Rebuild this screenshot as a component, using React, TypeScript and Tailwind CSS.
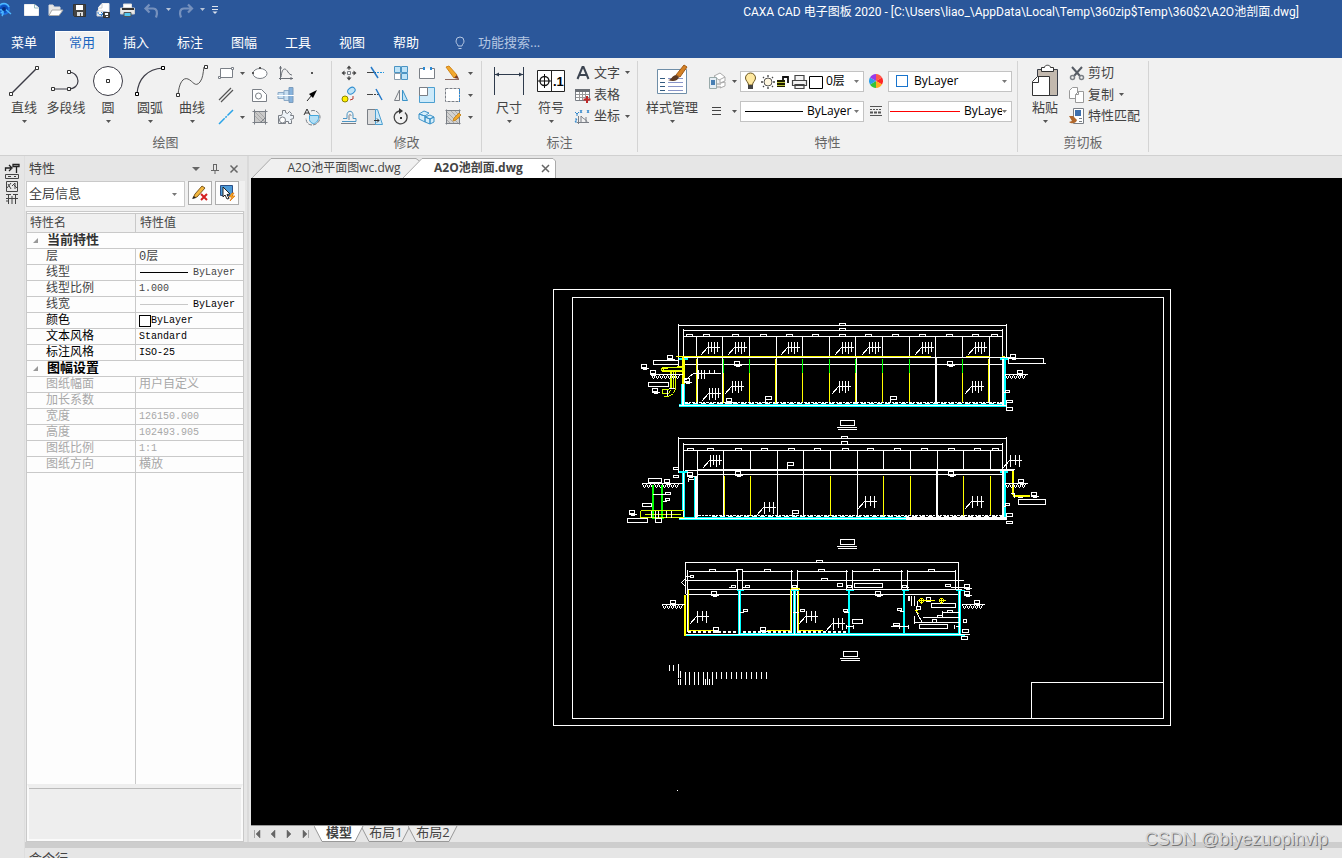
import { useState } from "react";
import type { ReactNode } from "react";
import clsx from "clsx";

interface IconProps {
    w?: number;
    h?: number;
    children: ReactNode;
}

function Icon({ w = 18, h = 18, children }: IconProps) {
    return (
        <svg width={w} height={h} viewBox={`0 0 ${w} ${h}`} fill="none" stroke="#7a7f86" className="shrink-0" aria-hidden="true">
            {children}
        </svg>
    );
}

function Caret({ color = "#555" }: { color?: string }) {
    return (
        <svg width="5" height="3" viewBox="0 0 5 3" fill={color} className="shrink-0" aria-hidden="true">
            <path d="M0 0h5L2.5 3z" />
        </svg>
    );
}

/* ---------- title bar ---------- */

const quickIcons = [
    {
        name: "新建",
        icon: (
            <Icon>
                <path d="M1.500 1.500h10l4 3v8h-14z" fill="#fff" stroke="#eee" />
                <path d="M11.500 1v4h4" stroke="#9bb" />
            </Icon>
        ),
    },
    {
        name: "打开",
        icon: (
            <Icon>
                <path d="M2 12V2h4l1 2h6v3" fill="#e6e6e6" stroke="#ddd" />
                <path d="M2 12.500 5 7h11l-4 5.500z" fill="#fff" stroke="#aaa" />
            </Icon>
        ),
    },
    {
        name: "保存",
        icon: (
            <Icon>
                <path d="M2.500 1.500h12v12h-11l-1-1z" fill="#444" stroke="#333" />
                <path d="M5 2h7v5H5z" fill="#fff" stroke="none" />
                <path d="M6 9h6v4H6z" fill="#ddd" stroke="none" />
                <path d="M9.500 10v3" stroke="#444" />
            </Icon>
        ),
    },
    {
        name: "另存为",
        icon: (
            <Icon>
                <path d="M3.500 8V4.500L7 .5h7V9" fill="#fff" stroke="#eee" />
                <path d="M3 5h4V1M2 8v5h6V8z" fill="#fff" stroke="#ccc" />
                <path d="M3 9c0 3 2 3 5 2M6 9l2 2-2 2" stroke="#2b7cd0" />
                <path d="M8.500 9.500h6v5h-6z" fill="#444" stroke="#333" />
                <path d="M10 10h3v2h-3zM11 13h2v1h-2z" fill="#fff" stroke="none" />
            </Icon>
        ),
    },
    {
        name: "打印",
        icon: (
            <Icon>
                <path d="M4.500 1h8v4h-8z" fill="#fff" stroke="#ddd" />
                <path d="M1.500 5h14v6h-14z" fill="#e8e8e8" stroke="#ccc" />
                <path d="M3 6h12" stroke="#333" strokeWidth="2" />
                <path d="M5 9.500h7v4H5z" fill="#55c8f0" stroke="#555" />
            </Icon>
        ),
    },
];

function TitleBar() {
    return (
        <div className="flex h-6 items-center">
            <div className="flex flex-1 items-center">
                <Icon w={20} h={20}>
                    <circle cx="4" cy="7" r="5" fill="#0b4fc0" stroke="#1f6fe0" strokeWidth="2" />
                    <path d="M0 3c4-3 8-1 9 2M1 11l4-4 6 5M0 8c3-1 4 3 2 6" stroke="#4db8ff" strokeWidth="1.500" />
                    <circle cx="4" cy="7" r="2" fill="#082f80" stroke="none" />
                </Icon>
                <div className="ml-[3px] flex gap-[6px]">
                    {quickIcons.map((q) => (
                        <button key={q.name} type="button" aria-label={q.name}>
                            {q.icon}
                        </button>
                    ))}
                    <button type="button" aria-label="撤销" className="flex items-center gap-[5px]">
                        <Icon>
                            <path d="M6.500 1.500 2.500 5.500l4 4M3 5.500h7c4 0 5 4 3 9" stroke="#7691bd" strokeWidth="2.200" />
                        </Icon>
                        <span className="pb-[6px]"><Caret color="#b8c4d8" /></span>
                    </button>
                    <button type="button" aria-label="重做" className="flex items-center gap-[5px]">
                        <Icon>
                            <path d="M11 1.500l4 4-4 4M14 5.500H7C3 5.500 2 9.500 4 14.500" stroke="#7691bd" strokeWidth="2.200" />
                        </Icon>
                        <span className="pb-[6px]"><Caret color="#b8c4d8" /></span>
                    </button>
                    <button type="button" aria-label="自定义快速访问工具栏">
                        <Icon w={8} h={14}>
                            <path d="M1 1.500h6M1 4.500h6" stroke="#dde4ee" />
                            <path d="M1.500 6.500h5L4 9z" fill="#dde4ee" stroke="none" />
                        </Icon>
                    </button>
                </div>
            </div>
            <h1 className="truncate pr-[43px] font-['Roboto','Noto_Sans_CJK_SC',sans-serif] text-[12px] font-normal text-white">
                CAXA CAD 电子图板 2020 - [C:\Users\liao_\AppData\Local\Temp\360zip$Temp\360$2\A2O池剖面.dwg]
            </h1>
        </div>
    );
}

const menuTabs = ["常用", "插入", "标注", "图幅", "工具", "视图", "帮助"];

function MenuTabs() {
    const [active, setActive] = useState("常用");
    return (
        <nav className="flex h-[27px] items-stretch text-[13px] text-white">
            <button type="button" className="w-[55px] pb-1 pl-[11px] text-left">
                菜单
            </button>
            {menuTabs.map((t) => (
                <button
                    key={t}
                    type="button"
                    onClick={() => setActive(t)}
                    className={clsx("w-[54px] pb-1", active === t && "border-x border-t border-white bg-[#f1f1f1] text-[#1a66c0]")}
                >
                    {t}
                </button>
            ))}
            <label className="ml-[21px] flex items-center gap-3 pb-1">
                <Icon w={12} h={14}>
                    <path d="M4 10c0-2-2-2-2-5a4 4 0 0 1 8 0c0 3-2 3-2 5zM4.500 12.500h3" stroke="#b4c6e2" />
                </Icon>
                <input type="text" aria-label="功能搜索" placeholder="功能搜索..." className="w-28 bg-transparent outline-none placeholder:text-[#b4c6e2]" />
            </label>
        </nav>
    );
}

/* ---------- ribbon ---------- */

function Group({ title, className, inset, children }: { title: string; className: string; inset: string; children: ReactNode }) {
    return (
        <section className={clsx("my-[3px] flex shrink-0 flex-col border-r border-[#d4d4d4]", className)}>
            <div className={clsx("flex h-[66px] pt-px", inset)}>{children}</div>
            <h2 className="mt-[6px] text-center text-[13px] leading-[18px] font-normal text-[#666]">{title}</h2>
        </section>
    );
}

function BigButton({ label, className = "w-[42px]", caret = true, children }: { label: string; className?: string; caret?: boolean; children: ReactNode }) {
    return (
        <button type="button" className={clsx("flex h-16 shrink-0 flex-col items-center pt-[2px] whitespace-nowrap", className)}>
            <Icon w={34} h={34}>
                {children}
            </Icon>
            <span className="leading-[18px]">{label}</span>
            <span className="flex h-[10px] items-center">{caret && <Caret />}</span>
        </button>
    );
}

function Tool({ name, children }: { name: string; children: ReactNode }) {
    return (
        <button type="button" aria-label={name} className="flex h-[22px] items-center justify-center">
            {children}
        </button>
    );
}

function DrawGroup() {
    return (
        <Group title="绘图" className="w-[332px]" inset="pl-[3px]">
            <BigButton label="直线">
                <path d="M4 30 30 4" stroke="#3c3c46" strokeWidth="1.500" />
                <path d="M2.500 28.500h3v3h-3zM28.500 2.500h3v3h-3z" fill="#fff" stroke="#333" />
            </BigButton>
            <BigButton label="多段线" caret={false}>
                <path d="M4 25h15c7 0 10-4 10-8s-3-9-10-9" stroke="#3c3c46" strokeWidth="1.200" />
                <path d="M2.500 23.500h3v3h-3zM18.500 23.500h3v3h-3zM18.500 6.500h3v3h-3z" fill="#fff" stroke="#333" />
            </BigButton>
            <BigButton label="圆">
                <circle cx="17" cy="17" r="14.500" fill="#fff" stroke="#3c3c46" />
                <path d="M15.500 15.500h3v3h-3z" fill="#fff" stroke="#333" />
            </BigButton>
            <BigButton label="圆弧">
                <path d="M4 30C5 15 14 5 30 4" stroke="#3c3c46" strokeWidth="1.200" />
                <path d="M2.500 28.500h3v3h-3zM28.500 2.500h3v3h-3z" fill="#fff" stroke="#000" />
            </BigButton>
            <BigButton label="曲线">
                <path d="M3 31C4 19 8 13 13 15s7 9 12 3c3-4 3-9 4-15" stroke="#555" />
                <path d="M1.500 29.500h3v3h-3zM29.500 1.500h3v3h-3z" fill="#fff" stroke="#333" />
            </BigButton>
            <div className="grid grid-cols-[25px_9px_26px_26px_26px]">
                <Tool name="矩形">
                    <Icon>
                        <path d="M3.500 4.500h12v9h-12z" fill="#fff" />
                        <path d="M1.500 12.500h2v2h-2zM14.500 3.500h2v2h-2z" fill="#fff" />
                    </Icon>
                </Tool>
                <Tool name="矩形选项"><Caret /></Tool>
                <Tool name="椭圆">
                    <Icon>
                        <ellipse cx="9" cy="9.500" rx="7" ry="5" fill="#fff" />
                        <path d="M1 8h2v2H1zM8 3h2v2H8z" fill="#555" stroke="none" />
                    </Icon>
                </Tool>
                <Tool name="公式曲线">
                    <Icon>
                        <path d="M3.500 2v14M2 14.500h14M4 13C5 4 8 3 11 8c1 2 3 3 4 3M2 4h3M14 13v3" stroke="#6a6f76" />
                    </Icon>
                </Tool>
                <Tool name="点">
                    <Icon><path d="M8 8h2v2H8z" fill="#555" stroke="none" /></Icon>
                </Tool>
                <Tool name="平行线">
                    <Icon><path d="M2 14 14 2M4 16 16 4" stroke="#555" strokeWidth="1.200" /></Icon>
                </Tool>
                <span />
                <Tool name="局部放大">
                    <Icon>
                        <path d="M1.500 3.500h9l5 5v7h-14z" fill="#fff" />
                        <circle cx="7.500" cy="10" r="3" />
                    </Icon>
                </Tool>
                <Tool name="孔轴">
                    <Icon>
                        <path d="M1 6.500h6v6H1z" fill="#c7def0" stroke="#8ba9c6" />
                        <path d="M7 4.500h5v10H7z" fill="#c7def0" stroke="#8ba9c6" />
                        <path d="M12 1.500h4v15h-4z" fill="#86b2dc" stroke="#7c9cbc" />
                        <path d="M0 9.500h17" stroke="#fff" />
                    </Icon>
                </Tool>
                <Tool name="箭头">
                    <Icon>
                        <path d="m4 15 5-6" stroke="#222" />
                        <path d="M14 4 6 8l4 4z" fill="#000" stroke="none" />
                    </Icon>
                </Tool>
                <Tool name="构造线">
                    <Icon><path d="M2 16 16 2" stroke="#2aa4e8" strokeWidth="1.500" strokeDasharray="8 1 2 1" /></Icon>
                </Tool>
                <Tool name="构造线选项"><Caret /></Tool>
                <Tool name="填充">
                    <Icon>
                        <path d="M3.500 3.500h11v11h-11z" fill="#c9c9c9" />
                        <path d="m4 8 6 6M4 4l10 10M8 4l6 6" stroke="#a8a8a8" />
                        <path d="M1.500 3.500h15M1.500 14.500h15M3.500 1.500v15M14.500 1.500v15M9 15l6-6" />
                    </Icon>
                </Tool>
                <Tool name="齿轮">
                    <Icon>
                        <path d="M1.500 7.500v8h7v-2h3v2h3v-3l-1-1 3-1v-3h-3l1-2-2-2-2 2-2-1v-2h-3v3l-1 2z" fill="#eef3f8" />
                        <circle cx="5.500" cy="12" r="3" fill="#fff" />
                    </Icon>
                </Tool>
                <Tool name="局部视图">
                    <Icon>
                        <path d="M6.500 7.500h9c1 4-2 8-5 8-2 0-4-2-4-4z" fill="#b5e0f6" stroke="#43a7dd" />
                        <path d="M8 3c4-2 9 2 9 6 0 5-4 8-8 8s-6-3-6-7" strokeDasharray="4 1" />
                        <path d="m1 7 3-6 3 6M2 5h4" stroke="#333" />
                    </Icon>
                </Tool>
            </div>
        </Group>
    );
}

function ModifyGroup() {
    return (
        <Group title="修改" className="w-[150px]" inset="pl-1">
            <div className="grid grid-cols-[26px_26px_26px_26px_26px_9px]">
                <Tool name="平移">
                    <Icon>
                        <path d="M7.500 7.500h3v3h-3z" />
                        <path d="M9 6V4M9 14v-2M4 9h2M12 9h2" stroke="#444" />
                        <path d="m6.500 4.500 2.500-3 2.500 3zM6.500 13.500l2.500 3 2.500-3zM4.500 6.500l-3 2.500 3 2.500zM13.500 6.500l3 2.500-3 2.500z" fill="#444" stroke="none" />
                    </Icon>
                </Tool>
                <Tool name="裁剪">
                    <Icon>
                        <path d="M1 8.500h9" stroke="#444" />
                        <path d="m5 3 7 11" stroke="#2479c8" strokeWidth="1.500" />
                        <path d="M11 8.500h7" stroke="#2496e0" strokeDasharray="2 1" />
                    </Icon>
                </Tool>
                <Tool name="阵列">
                    <Icon>
                        <path d="M2.500 2.500h6v6h-6zM9.500 2.500h6v6h-6zM9.500 9.500h6v6h-6z" fill="#bfe3f7" stroke="#4b95c4" />
                        <path d="M2.500 9.500h6v6h-6z" fill="#fff" stroke="#8a9dac" />
                    </Icon>
                </Tool>
                <Tool name="打断">
                    <Icon>
                        <path d="M6 4.500H1.500v10h15v-10H13" fill="#fff" />
                        <path d="M5 3h2v3H5zM12 3h2v3h-2z" fill="#2d8ad4" stroke="none" />
                    </Icon>
                </Tool>
                <Tool name="删除">
                    <Icon>
                        <path d="m2 3 3-1 8 9-3 3z" fill="#f2a82d" stroke="#d18518" />
                        <path d="m10 14 3-3 2 4z" fill="#7c3c22" stroke="none" />
                        <path d="M1 15.500h14" stroke="#8d6b62" />
                    </Icon>
                </Tool>
                <Tool name="删除选项"><Caret /></Tool>
                <Tool name="平移复制">
                    <Icon>
                        <circle cx="5" cy="13" r="3" fill="#ffee00" stroke="#8a8400" />
                        <ellipse cx="11.500" cy="5" rx="4" ry="3" fill="#bfe3f7" stroke="#2f8ed0" transform="rotate(-35 11 5)" />
                        <path d="M10 14l3-1v-3" stroke="#b5352c" />
                    </Icon>
                </Tool>
                <Tool name="延伸">
                    <Icon>
                        <path d="M1 8.500h6" stroke="#444" />
                        <path d="M8 8.500h5" stroke="#444" strokeDasharray="2 1" />
                        <path d="m10 3 6 11" stroke="#2479c8" strokeWidth="1.500" />
                    </Icon>
                </Tool>
                <Tool name="镜像">
                    <Icon>
                        <path d="M7.500 4v10.500h-5z" fill="#eee" />
                        <path d="M10.500 4v10.500h5z" fill="#bfe3f7" stroke="#3a93c8" />
                    </Icon>
                </Tool>
                <Tool name="缩放">
                    <Icon>
                        <path d="M1.500 1.500h15v15h-15z" fill="#cdeafa" stroke="#4b9fd0" />
                        <path d="M1.500 1.500h8v8h-8z" fill="#fff" />
                    </Icon>
                </Tool>
                <Tool name="拉伸">
                    <Icon>
                        <path d="M1.500 2.500h14v13h-14z" fill="#fff" strokeDasharray="3 1" />
                        <path d="M15.500 3v13" stroke="#2d8ad4" strokeDasharray="2 1" />
                    </Icon>
                </Tool>
                <Tool name="拉伸选项"><Caret /></Tool>
                <Tool name="等距线">
                    <Icon>
                        <path d="M3 10.500h4V7c0-5 6-5 6 0v3.500h3v3H2" stroke="#4b95c4" />
                        <path d="M1 15.500h15M9 12V8c0-2 2-2 2 0" />
                    </Icon>
                </Tool>
                <Tool name="倾斜">
                    <Icon>
                        <path d="M1.500 1.500h8v15h-8z" fill="#dedede" />
                        <path d="M9.500 1.500h2l5 15h-7z" fill="#cdeafa" stroke="#4b9fd0" />
                        <path d="M8 12.500h5m-2-2 2 2-2 2" stroke="#333" />
                    </Icon>
                </Tool>
                <Tool name="旋转">
                    <Icon>
                        <path d="M7 3a6.500 6.500 0 1 0 6 1.500" stroke="#444" strokeWidth="1.300" />
                        <path d="m7 0 4 3-4 3z" fill="#333" stroke="none" />
                        <path d="M8 9h2v2H8z" fill="#333" stroke="none" />
                    </Icon>
                </Tool>
                <Tool name="旋转复制">
                    <Icon>
                        <path d="m1 6 5-3 5 2-4 3zM1 6v5l6 3V8zM7 9l5-2 4 2-4 2zM7 9v5l5 2v-5zM12 11l4-2v5l-4 2z" fill="#d6eefa" stroke="#3d93c8" />
                    </Icon>
                </Tool>
                <Tool name="填充编辑">
                    <Icon>
                        <path d="M3 3h12v12H3z" fill="#d2d2d2" stroke="none" />
                        <path d="m3 8 7 7M3 4l11 11M7 3l8 8M3 12l3 3M11 3l4 4" stroke="#aaa" />
                        <path d="M1.500 2.500h15M1.500 15.500h15M2.500 1.500v15M15.500 1.500v15" />
                        <path d="m10 10 5-5 2 2-5 5-3 1z" fill="#f2a82d" stroke="#c58a28" />
                    </Icon>
                </Tool>
                <Tool name="填充编辑选项"><Caret /></Tool>
            </div>
        </Group>
    );
}

function TextTool({ label, caret, children }: { label: string; caret?: boolean; children: ReactNode }) {
    return (
        <button type="button" className="flex h-[22px] items-center gap-[2px] whitespace-nowrap">
            {children}
            <span>{label}</span>
            {caret && <span className="pl-[3px]"><Caret /></span>}
        </button>
    );
}

function AnnotateGroup() {
    return (
        <Group title="标注" className="w-[156px]" inset="pl-[6px]">
            <BigButton label="尺寸">
                <path d="M2.500 3v28M31.500 3v28M3 10.500h28" stroke="#2f3b4c" />
                <path d="m3 10.500 4-2v4zM31 10.500l-4-2v4z" fill="#2f3b4c" stroke="none" />
            </BigButton>
            <BigButton label="符号">
                <path d="M3.500 6.500h27v21h-27zM17.500 6v22" fill="#fff" stroke="#222" />
                <circle cx="10.500" cy="17" r="4.500" stroke="#111" strokeWidth="1.300" />
                <path d="M4 17h13M10.500 10v14" stroke="#111" />
                <text x="19" y="22" fill="#000" stroke="none" className="font-['Liberation_Sans'] text-[13px] font-bold">.1</text>
            </BigButton>
            <div className="ml-[2px] flex flex-col">
                <TextTool label="文字" caret>
                    <Icon>
                        <path d="m3.500 15 5-12h1l5 12M5.500 11h7" stroke="#3c4450" strokeWidth="2" />
                    </Icon>
                </TextTool>
                <TextTool label="表格">
                    <Icon>
                        <path d="M1.500 3.500h14v11h-14z" fill="#fff" />
                        <path d="M1 3h15v3H1z" fill="#6c7076" stroke="none" />
                        <path d="M2 8.500h13M2 11.500h13M5.500 6v8M8.500 6v8M11.500 6v8" stroke="#999" />
                        <path d="M13 10v7M9.500 13.500h7" stroke="#c02828" strokeWidth="2" />
                    </Icon>
                </TextTool>
                <TextTool label="坐标" caret>
                    <Icon>
                        <path d="M4.500 9v8M3 15.500h12M7 15V9c3 4 6 3 6 7M12 10v6" />
                        <path d="m1 5 2 2 2-2M3 7v2M6 3l2 3M8 3 6 6M13 3l2 3M15 3l-2 3M1 12h2l-2 3h2" stroke="#3388cc" />
                    </Icon>
                </TextTool>
            </div>
        </Group>
    );
}

interface ComboProps {
    label: string;
    value: string;
    className?: string;
    lead?: ReactNode;
}

function Combo({ label, value, className = "", lead }: ComboProps) {
    return (
        <div className="flex h-[21px] w-[124px] items-center overflow-hidden border border-[#c3c3c3] bg-white pr-[4px]">
            {lead}
            <select aria-label={label} className={clsx("min-w-0 flex-1 appearance-none overflow-hidden bg-transparent text-[12px] text-clip whitespace-nowrap text-black outline-none", className)}>
                <option>{value}</option>
            </select>
            <Caret color="#777" />
        </div>
    );
}

function PropertyGroup() {
    return (
        <Group title="特性" className="w-[380px]" inset="pl-[5px]">
            <BigButton label="样式管理" className="w-[58px]">
                <path d="M2.500 5.500h29v24h-29z" fill="#fff" stroke="#6f8ea8" />
                <path d="M5 14.500h5M5 18.500h5M5 22.500h5M5 26.500h5" stroke="#335b80" />
                <path d="M13 14.500h15M13 18.500h15M13 22.500h15M13 26.500h15" stroke="#8995c8" />
                <path d="m21 11 8-10 3 2-7 10z" fill="#d48125" stroke="#a25a15" />
                <path d="M13 16c4 0 3-4 8-5l3 2c-1 4-6 5-11 3z" fill="#5d3a22" stroke="none" />
            </BigButton>
            <div className="grid auto-rows-[30px] grid-cols-[31px_8px_124px_24px_124px] items-center pt-1">
                <span className="flex justify-center">
                    <Icon>
                        <path d="m6 4 6-3 5 4-6 3zM12 8v3l5-2V5M13 11l4-1v4l-5 2" fill="#fff" stroke="#aaa" />
                        <path d="M1.500 5.500h7v11h-7z" fill="#e5eef5" stroke="#9aa" />
                        <path d="M3 8h4v5H3z" fill="#477fb4" stroke="none" />
                        <path d="M9 12h4M9 15h4" stroke="#999" />
                    </Icon>
                </span>
                <Caret />
                <Combo
                    label="图层"
                    value="0层"
                    className="pl-[2px]"
                    lead={
                        <Icon w={83} h={19}>
                            <path d="M7.500 13c0-3-3-4-3-7a5 5 0 0 1 10 0c0 3-3 4-3 7z" fill="#ffe9a0" stroke="#6a5520" />
                            <path d="M7 13h5v4H7z" fill="#444" stroke="none" />
                            <circle cx="27" cy="10" r="4" fill="#fff7df" stroke="#555" />
                            <path d="M27 3v2M27 15v2M20 10h2M32 10h2M22 5l1 1M32 5l-1 1M22 15l1-1M32 15l-1-1" stroke="#444" strokeWidth="1.300" />
                            <path d="M36 8h8v7h-8z" fill="#1c1c00" stroke="none" />
                            <path d="M36 10.500h8M36 13.500h8" stroke="#b9c23a" />
                            <path d="M42 8V5h5v6" stroke="#111" strokeWidth="1.800" />
                            <path d="M54 3.500h9v5h-9zM51.500 8.500h14v5h-14zM54 12.500h9v4h-9z" fill="#f3f3f3" stroke="#444" strokeWidth="1.200" />
                            <path d="M68.500 4.500h13v12h-13z" fill="#fff" stroke="#000" />
                        </Icon>
                    }
                />
                <span className="flex justify-center">
                    <Icon w={14} h={14}>
                        <g stroke="none">
                            <path d="M7 7 7 0a7 7 0 0 1 6 3.500z" fill="#ff5a4b" />
                            <path d="m7 7 6-3.500a7 7 0 0 1 0 7z" fill="#ff2626" />
                            <path d="m7 7 6 3.500A7 7 0 0 1 7 14z" fill="#ffae1e" />
                            <path d="M7 7v7a7 7 0 0 1-6-3.500z" fill="#35c437" />
                            <path d="M7 7 1 10.500a7 7 0 0 1 0-7z" fill="#2c9fe8" />
                            <path d="M7 7 1 3.500A7 7 0 0 1 7 0z" fill="#9a3be8" />
                        </g>
                    </Icon>
                </span>
                <Combo
                    label="颜色"
                    value="ByLayer"
                    lead={<span className="mr-[6px] ml-[7px] size-3 shrink-0 border border-[#1874cd]" />}
                />
                <span className="flex justify-center">
                    <Icon w={12} h={12}>
                        <path d="M1 2.500h9M1 5.500h9M1 9.500h9" stroke="#444" />
                    </Icon>
                </span>
                <Caret />
                <Combo label="线型" value="ByLayer" className="pl-[4px]" lead={<span className="ml-1 h-px w-[58px] shrink-0 bg-black" />} />
                <span className="flex justify-center">
                    <Icon w={14} h={14}>
                        <path d="M1 2.500h12" stroke="#555" />
                        <path d="M1 5.500h12" stroke="#555" strokeDasharray="2 1" />
                        <path d="M1 8.500h12" stroke="#555" strokeWidth="2" strokeDasharray="3 1" />
                        <path d="M1 11.500h12" stroke="#555" />
                    </Icon>
                </span>
                <Combo label="线宽" value="ByLayer" className="pl-[4px]" lead={<span className="ml-px w-[70px] shrink-0 border-t border-[#ff0000]" />} />
            </div>
        </Group>
    );
}

function ClipboardGroup() {
    return (
        <Group title="剪切板" className="w-[131px]" inset="pl-[6px]">
            <BigButton label="粘贴">
                <path d="M9.500 5.500h20v26h-20z" fill="#c3b9ae" stroke="#3b3f48" />
                <path d="M13.500 7.500v-4h3c0-3 6-3 6 0h3v4z" fill="#fff" stroke="#333" />
                <path d="M4.500 31.500v-14l5-5h12v19z" fill="#fff" stroke="#333" />
                <path d="M4.500 18.500h6v-6" stroke="#333" />
            </BigButton>
            <div className="ml-[2px] flex flex-col">
                <TextTool label="剪切">
                    <Icon>
                        <path d="m4 3 8 9M14 3 6 12" stroke="#555b64" strokeWidth="2" />
                        <circle cx="4.500" cy="13.500" r="2" strokeWidth="1.500" />
                        <circle cx="13.500" cy="13.500" r="2" strokeWidth="1.500" />
                    </Icon>
                </TextTool>
                <TextTool label="复制" caret>
                    <Icon>
                        <path d="M1.500 12.500v-8l3-3h5v11z" fill="#fff" stroke="#999" />
                        <path d="M7.500 16.500v-8l3-3h5v11z" fill="#fff" stroke="#999" />
                        <path d="M7.500 8.500h3v-3" stroke="#999" />
                    </Icon>
                </TextTool>
                <TextTool label="特性匹配">
                    <Icon>
                        <path d="M5.500 1.500h10v15h-10z" fill="#fff" />
                        <path d="M7 3h6v6H7z" fill="#3d6fae" stroke="none" />
                        <path d="M11 11.500h3M11 14.500h3" />
                        <path d="M1 9h4l4 4c-1 4-6 4-8 2l3-1z" fill="#b0672c" stroke="none" />
                    </Icon>
                </TextTool>
            </div>
        </Group>
    );
}

/* ---------- property panel ---------- */

interface PropRow {
    name: string;
    value: ReactNode;
    head?: boolean;
    tone: string;
}

const propRows: PropRow[] = [
    { name: "当前特性", value: "", head: true, tone: "text-[#333]" },
    { name: "层", value: "0层", tone: "text-[#444]" },
    {
        name: "线型",
        value: <span className="flex items-center gap-[5px]"><i className="ml-px h-px w-12 bg-black" />ByLayer</span>,
        tone: "text-[#444]",
    },
    { name: "线型比例", value: "1.000", tone: "text-[#444]" },
    {
        name: "线宽",
        value: <span className="flex items-center gap-[5px] text-black"><i className="ml-px h-px w-12 bg-[#c8c8c8]" />ByLayer</span>,
        tone: "text-[#444]",
    },
    {
        name: "颜色",
        value: <span className="flex items-center"><i className="size-3 border border-black bg-white" />ByLayer</span>,
        tone: "text-black",
    },
    { name: "文本风格", value: "Standard", tone: "text-black" },
    { name: "标注风格", value: "ISO-25", tone: "text-black" },
    { name: "图幅设置", value: "", head: true, tone: "text-black" },
    { name: "图纸幅面", value: "用户自定义", tone: "text-[#a8a8a8]" },
    { name: "加长系数", value: "", tone: "text-[#a8a8a8]" },
    { name: "宽度", value: "126150.000", tone: "text-[#a8a8a8]" },
    { name: "高度", value: "102493.905", tone: "text-[#a8a8a8]" },
    { name: "图纸比例", value: "1:1", tone: "text-[#a8a8a8]" },
    { name: "图纸方向", value: "横放", tone: "text-[#a8a8a8]" },
];

function PropertyPanel() {
    return (
        <aside className="flex w-[220px] shrink-0 flex-col">
            <header className="flex h-[25px] items-center justify-between pr-[6px] pl-1 text-[13px] text-[#444]">
                <h2 className="font-normal">特性</h2>
                <div className="flex items-center gap-[9px]">
                    <button type="button" aria-label="窗口位置">
                        <Icon w={10} h={10}><path d="M1 3h8L5 7z" fill="#666" stroke="none" /></Icon>
                    </button>
                    <button type="button" aria-label="自动隐藏">
                        <Icon w={10} h={10}><path d="M3.500 1v5M6.500 1v5M3 .5h4M1 6.500h8M5 7v3" stroke="#666" /></Icon>
                    </button>
                    <button type="button" aria-label="关闭">
                        <Icon w={10} h={10}><path d="m1.500 1.500 7 7M8.500 1.500l-7 7" stroke="#666" strokeWidth="1.500" /></Icon>
                    </button>
                </div>
            </header>
            <div className="flex h-[30px] items-start gap-[3px] bg-[#f0f0f0] pr-[6px] pl-px">
                <div className="flex h-[26px] w-[159px] items-center border border-[#c9c9c9] bg-white pr-[7px] pl-[2px]">
                    <select aria-label="选择对象" className="min-w-0 flex-1 appearance-none bg-transparent text-[13px] text-[#444] outline-none">
                        <option>全局信息</option>
                    </select>
                    <Caret color="#777" />
                </div>
                <div className="flex flex-1 justify-between">
                    <button type="button" aria-label="清除" className="flex size-6 items-center justify-center border border-[#adadad] bg-[#fdfdfd]">
                        <Icon>
                            <path d="m2 14 2-4 7-8 3 2-8 9z" fill="#f4b73e" stroke="#7b5a22" />
                            <path d="m1 15 2-3 2 2z" fill="#222" stroke="none" />
                            <path d="m10 10 6 6M16 10l-6 6" stroke="#d42020" strokeWidth="2" />
                        </Icon>
                    </button>
                    <button type="button" aria-label="快速选择" className="flex size-6 items-center justify-center border border-[#adadad] bg-[#fdfdfd]">
                        <Icon>
                            <path d="M2.500 1.500h12v10h-12z" fill="#4d9bd8" stroke="#2b4f86" />
                            <path d="m5 3 7 7-3 .5 2 4-2 .5-2-4-2 2z" fill="#fff" stroke="#222" />
                            <path d="m14 9-3 4h3l-2 4 5-5h-3l2-3z" fill="#ffb020" stroke="#d87010" strokeWidth=".7" />
                        </Icon>
                    </button>
                </div>
            </div>
            <div className="mr-px ml-px flex min-h-0 flex-1 flex-col border border-[#c9c9c9] bg-[#fdfdfd] pt-px font-['Liberation_Mono','Noto_Sans_CJK_SC',monospace]">
                <table className="w-full table-fixed border-separate border-spacing-0 text-left">
                    <colgroup>
                        <col className="w-[109px]" />
                        <col />
                    </colgroup>
                    <thead>
                        <tr className="bg-[#f0f0f0] text-[12px] leading-[20px] text-[#444]">
                            <th className="border border-l-0 border-[#c9c9c9] p-0 pl-[3px] font-normal">
                                <div className="h-[18px]">特性名</div>
                            </th>
                            <th className="border-y border-[#c9c9c9] p-0 pl-[4px] font-normal">
                                <div className="h-[18px]">特性值</div>
                            </th>
                        </tr>
                    </thead>
                    <tbody>
                        {propRows.map((r) =>
                            r.head ? (
                                <tr key={r.name} className={r.tone}>
                                    <th colSpan={2} className="border-b border-[#c9c9c9] p-0 text-[13px] leading-[15px] font-bold">
                                        <div className="flex h-[15px] items-center gap-[9px] pl-[6px]">
                                            <Icon w={5} h={5}><path d="M5 0v5H0z" fill="#999" stroke="none" /></Icon>
                                            {r.name}
                                        </div>
                                    </th>
                                </tr>
                            ) : (
                                <tr key={r.name} className={r.tone}>
                                    <th className="border-r border-b border-[#c9c9c9] p-0 pl-[19px] text-[12px] leading-[17px] font-normal">
                                        <div className="h-[15px]">{r.name}</div>
                                    </th>
                                    <td className="border-b border-[#c9c9c9] p-0 pl-[3px] whitespace-nowrap">
                                        <div className={clsx("h-[15px]", /[\u4e00-\u9fff]/.test(String(r.value)) ? "text-[12px] leading-[17px]" : "text-[10px] leading-[15px]")}>{r.value}</div>
                                    </td>
                                </tr>
                            )
                        )}
                    </tbody>
                </table>
                <div className="w-[109px] flex-1 border-r border-[#c9c9c9]" />
                <div className="h-[57px] border-2 border-t-[4px] border-[#fafafa] border-t-[#eee] bg-[#eee]">
                    <div className="h-px bg-[#bbb]" />
                </div>
            </div>
        </aside>
    );
}

/* ---------- drawing ---------- */

type Pt = [number, number];

// 引线：斜线 + 横线 + 竖向文字笔画
function Leader({ at, n = 4 }: { at: Pt; n?: number }) {
    const [x, y] = at;
    const marks = Array.from({ length: n }, (_, i) => `M${x + 8 + Math.round((i * 9) / (n - 1))} ${y - 14}v${i % 2 ? 10 : 12}`).join("");
    return <path d={`M${x} ${y}l7 -8h12${marks}`} />;
}

function Tags({ list, w = 6 }: { list: Pt[]; w?: number }) {
    return <path d={list.map(([x, y]) => `M${x - w / 2} ${y + 3}v-2h${w}v2`).join("")} />;
}

// 标高符号
function Levels({ list }: { list: Pt[] }) {
    return <path d={list.map(([x, y]) => `M${x - 3} ${y}v-3h5v3zM${x - 4} ${y + 1}h8M${x - 2} ${y + 2}h4`).join("")} />;
}

function Ground({ x, y, w }: { x: number; y: number; w: number }) {
    const teeth = Array.from({ length: Math.floor((w - 2) / 4) }, () => "l2 3l2 -3").join("");
    return (
        <>
            <path d={`M${x} ${y}h${w}`} />
            <path d={`M${x + 1} ${y + 1}${teeth}`} />
        </>
    );
}

function Caption({ x, y }: { x: number; y: number }) {
    return <path d={`M${x + 4} ${y}h14v5h-14zM${x} ${y + 7}h20M${x + 1} ${y + 9}h19`} />;
}

const cols1 = [696, 722, 749, 776, 802, 829, 855, 882, 909, 935, 962, 989];
const cols2 = [697, 723, 750, 777, 803, 830, 857, 883, 910, 937, 963, 990];
const gates1 = [749, 802, 829, 855, 882, 909, 962];
const solid2 = [697, 723, 777, 803, 857, 937];

function SectionOne() {
    return (
        <g>
            <path d="M678 325h328M683 330h319M683 336h319M678 323v42M683 328v29M1006 323v36M1002 328v29M683 364h319" />
            <path d={cols1.map((x) => `M${x} 335v22`).join("")} />
            <path d="M697 357v46M722 357v46M776 357v46M856 357v46M935 357v46M936 357v46M989 357v46" />
            <path d={gates1.map((x) => `M${x} 358v14`).join("")} stroke="#0f0" />
            <path d={gates1.map((x) => `M${x} 372v30`).join("")} stroke="#ff0" />
            <path d="M696 358v44M723 372v30M775 358v44M988 358v44" stroke="#ff0" />
            <path d="M723 358v14" stroke="#0f0" />
            <path d="M683 357h330" />
            <path d="M675 356h255M965 356h24" stroke="#ff0" />
            <path d="M684 402h318" strokeDasharray="3 1 2 1" />
            <path d="M684 403h318" strokeDasharray="5 3" />
            <path d="M678 404h328M678 406h328M681 383v20M684 383v20M1004 358v46M1005 358v46M678 358h9M678 359h9M999 358h8M999 359h8" stroke="#0ff" />
            <path d="M678 405h328M682 383v22M683 383v22M1002 358v46M1003 358v46" />
            <path d="M682 355v28M683 355v28M684 358v25M1001 356h3" stroke="#ff0" />
            <Tags list={[[689, 333], [706, 333], [735, 333], [763, 333], [789, 333], [815, 333], [842, 333], [868, 333], [895, 333], [922, 333], [949, 333], [975, 333], [994, 333], [842, 322], [842, 327]]} />
            {[700, 727, 780, 834, 861, 914, 967].map((x) => <Leader key={x} at={[x, 355]} />)}
            <Leader at={[701, 401]} />
            {[724, 831, 964].map((x) => <Leader key={x} at={[x, 394]} />)}
            <path d="M684 380l9 -7h27M698 369v9M701 369v9M704 369v9M709 369v4M714 369v4" />
            <Levels list={[[737, 364], [729, 401], [950, 364], [687, 381]]} />
            <path d="M765 402v-6h6v3h-6M890 402v-6h6v3h-6" />
            {/* 进水管 */}
            <path d="M661 367h22M661 370h22M661 367v3M670 371v17M671 371v17M675 371v17M673 371v17M670 390l-2 3h-6v-4h6M675 388l-2 5-5 3h-5" stroke="#d8ff00" />
            <path d="M663 368v3M661 368h6M676 366h8M661 371h22" stroke="#ff0" />
            <path d="M653 360h25v4h-25zM648 382h20v4h-20zM668 388h6M667 389v6" />
            <Ground x={650} y={374} w={32} />
            <Levels list={[[644, 367], [670, 358], [653, 373], [655, 391]]} />
            <path d="M1008 358h35v5h-35zM1008 363h37" />
            <Ground x={1004} y={374} w={23} />
            <Levels list={[[1013, 357], [1020, 373]]} />
            <path d="M1005 390h4v2h-4zM1006 400h6v2h-6zM1006 407h6v3h-6zM1001 392h4M1006 402v5" />
            <Caption x={836} y={420} />
        </g>
    );
}

function SectionTwo() {
    return (
        <g>
            <path d="M678 438h328M683 444h319M683 450h319M678 436v36M683 442v28M1006 436v34M1002 442v27M697 469h316M697 470h316M697 474h305M684 470h13" />
            <path d={cols2.map((x) => `M${x} 449v21`).join("")} />
            <path d={solid2.map((x) => `M${x} 470v46`).join("")} />
            <path d={cols2.filter((x) => !solid2.includes(x)).map((x) => `M${x} 475v40`).join("")} stroke="#ff0" />
            <path d="M936 470v46" />
            <path d="M724 475v40" stroke="#ff0" />
            <path d="M697 515h14M711 515h291" strokeDasharray="3 1 2 1" />
            <path d="M711 516h291" strokeDasharray="5 3" />
            <path d="M678 517h228M678 519h228M682 472v38M684 472v45M694 475v42M1004 472v46M1005 472v46M678 471h9M678 472h9M999 471h8M999 472h8" stroke="#0ff" />
            <path d="M678 518h328M905 517h101M905 519h101M683 472v44M695 475v42M696 475v42M1002 470v47M1003 470v47" />
            <Tags list={[[690, 447], [710, 447], [738, 447], [764, 447], [791, 447], [817, 447], [845, 447], [870, 447], [897, 447], [924, 447], [951, 447], [977, 447], [995, 447], [844, 435], [844, 440]]} />
            <Leader at={[702, 468]} />
            <Leader at={[756, 515]} n={3} />
            <Leader at={[857, 509]} n={3} />
            <Leader at={[964, 509]} n={3} />
            <Leader at={[1002, 468]} n={3} />
            <Levels list={[[738, 474], [951, 474], [690, 475]]} />
            <path d="M787 469v-7h6v3h-6M792 516v-6h6v3h-6M673 467h5v2h-5zM673 475h5v2h-5zM687 479h6M688 477v4" />
            {/* 左侧阀门井 */}
            <Ground x={641} y={483} w={41} />
            <path d="M652 484v34M653 484v34M661 484v34M662 484v34M652 518h11" stroke="#0f0" />
            <path d="M640 510h43M640 517h43M640 510v7M644 514h36" stroke="#d8ff00" />
            <path d="M648 478h13v4h-13zM642 503h9v3h-9zM627 518h20v4h-20zM655 518h6v4h-6zM652 494h13M665 492h5v2h-5zM662 501h4M665 498h4v2h-4zM651 510v7M655 510v8M658 510v8M666 510v7M671 510v7" />
            <Levels list={[[632, 513], [667, 482]]} />
            {/* 出水管 */}
            <path d="M1012 470v24M1013 470v24M1012 495h17M1012 496h17" stroke="#ff0" />
            <path d="M1010 469h4M1010 493h4v4M1018 499h27v5h-27zM1017 497h5" />
            <Ground x={1004} y={483} w={23} />
            <Levels list={[[1021, 482], [1034, 495]]} />
            <path d="M1005 503h4v2h-4zM1001 506h4M1006 513h6v3h-6zM1006 521h6v2h-6z" />
            <Caption x={836} y={539} />
        </g>
    );
}

function SectionThree() {
    return (
        <g>
            <path d="M685 562h273M685 561v32M958 561v30M685 580h278M687 589h274M685 594h274M688 571h49M742 571h50M797 571h50M852 571h50M907 571h48" />
            <path d={[687, 737, 742, 791, 797, 846, 852, 901, 907, 955].map((x) => `M${x} 569v20`).join("")} />
            <path d="M684 594v41M685 594v41M688 589v41M688 630h24M790 588v42M766 630h25M798 588v42M798 630h24M790 588h9" stroke="#ff0" />
            <path d="M687 588v43M791 590v42M797 590v42" />
            <path d="M687 632h50M742 632h48M797 632h50M687 631h50M742 631h48M797 631h50" strokeDasharray="3 2" />
            <path d="M738 590v43M740 590v43M736 590h7M793 590v43M795 590v43M790 590h8M848 590v43M849 590v43M845 590h8M903 590v43M904 590v43M901 590h7M958 590v43M960 590v43M955 590h9M685 635h279M739 633h220" stroke="#0ff" />
            <path d="M739 590v43M794 590v43M959 590v43M685 634h279" />
            <Tags list={[[712, 568], [739, 568], [767, 568], [821, 568], [876, 568], [931, 568], [819, 559], [824, 577]]} />
            <path d="M690 575h3v2h-3zM731 585h4v2h-4zM745 585h4v2h-4zM792 585h4v2h-4zM837 583h5v3h-5zM847 585h4v2h-4zM902 585h4v2h-4zM945 584h5v2h-5zM743 609h4v2h-4zM800 609h4v2h-4zM843 609h4v2h-4zM897 608h4v2h-4zM916 606h4v3h-4zM963 619h3v3h-3z" />
            <path d="M681 582l4 -4M681 582l4 4M684 576h6M728 587h6M742 587h5M791 587h6M845 587h7M901 587h7M950 587h14M738 612h5M792 612h6M843 612h5M899 611h4" />
            <Leader at={[689, 624]} n={3} />
            <Leader at={[798, 624]} n={3} />
            <Leader at={[825, 631]} n={3} />
            <Levels list={[[714, 594], [878, 594], [716, 630], [763, 630], [967, 587], [967, 594]]} />
            <path d="M854 583h28v4h-28zM852 619h10v4h-10zM846 626h7M846 624v4M853 624v4M890 626h18M899 624v4M908 624v4M893 623h6v2h-6zM962 629h6v3h-6zM961 636h6v3h-6zM963 634h6" />
            {/* 鼓风管道 */}
            <path d="M908 595v5M909 595v5M911 595v10M914 595v10M917 600v5M931 603h24v4h-24zM919 624h28v4h-28zM942 612h16M942 610v4M922 617h36M914 622h44M914 615v8M954 624v4M955 626h4" />
            <path d="M926 601h4v-4h-4zM947 612h5v-2h-5zM937 617h5v-2h-5zM932 622h4v-3h-4z" />
            <path d="M917 600h17M921 597v6M938 600h7M941 597v6M915 610l4 4M914 610h3" stroke="#ff0" />
            <circle cx="921" cy="600" r="2" stroke="#ff0" />
            <circle cx="941" cy="600" r="2" stroke="#ff0" />
            <path d="M916 612l6 10" />
            <Ground x={661} y={604} w={23} />
            <Ground x={961} y={604} w={23} />
            <Levels list={[[673, 603], [977, 603]]} />
            <Caption x={839} y={651} />
        </g>
    );
}

const noteTicks = Array.from({ length: 11 }, (_, i) => 716 + i * 5);

function DrawingCanvas() {
    return (
        <div className="min-h-0 flex-1 overflow-hidden bg-black">
            <svg viewBox="251 178 1091 647" className="block size-full" fill="none" stroke="#fff" strokeWidth="1" shapeRendering="crispEdges" role="img" aria-label="A2O池剖面">
                <g transform="translate(.5 .5)">
                    <path d="M553 289h617v436h-617zM572 297h591v421h-591zM1031 718v-36h132" />
                    <SectionOne />
                    <SectionTwo />
                    <SectionThree />
                    <path d="M669 664v6M673 664v6M678 663v14M680 670v7M678 678v6M680 678v6" />
                    <path d={[685, 689, 694, 698, 703, 712].map((x) => `M${x} 671v13`).join("")} />
                    <path d="M707 671v7M705 678v6M707 678v6M709 678v6" />
                    <path d={noteTicks.map((x) => `M${x} 671v7`).join("")} />
                    <path d="M676 790h1" />
                </g>
            </svg>
        </div>
    );
}

/* ---------- document area ---------- */

function DocTabs() {
    return (
        <div className="flex h-[22px] shrink-0 items-end bg-[#e6e6e6] text-[12px] text-[#444]">
            <button type="button" className="relative h-5 w-[169px] pl-[17px]">
                <svg className="absolute inset-0 size-full" viewBox="0 0 169 20" preserveAspectRatio="none" aria-hidden="true">
                    <path d="M1 20 20 .5h145l4 3V20" fill="#f0f0f0" stroke="#aaa" />
                </svg>
                <span className="relative">A2O池平面图wc.dwg</span>
            </button>
            <div className="relative -ml-[18px] flex h-5 w-[154px] items-center justify-between pr-[6px] pl-[32px]">
                <svg className="absolute inset-0 size-full" viewBox="0 0 154 20" preserveAspectRatio="none" aria-hidden="true">
                    <path d="M1 20 20 .5h131l2.500 2.500V20" fill="#fff" stroke="#aaa" />
                </svg>
                <button type="button" className="relative font-bold">A2O池剖面.dwg</button>
                <button type="button" aria-label="关闭文档" className="relative">
                    <Icon w={9} h={9}><path d="m1 1 7 7M8 1 1 8" stroke="#666" strokeWidth="1.500" /></Icon>
                </button>
            </div>
        </div>
    );
}

const layoutTabs = ["模型", "布局1", "布局2"];

function LayoutTabs() {
    const [active, setActive] = useState("模型");
    return (
        <div className="flex h-[17px] shrink-0 items-stretch border-t border-[#999] bg-[#e6e6e6] text-[13px] leading-[13px] text-[#444]">
            <div className="flex items-center gap-[6px] pl-px">
                {["M2.500 1v8M8 1v8L4 5z", "M7 1v8L3 5z", "M3 1v8l4-4z", "M8.500 1v8M3 1v8l4-4z"].map((d) => (
                    <button key={d} type="button" aria-label="切换布局">
                        <Icon w={10} h={10}><path d={d} fill="#666" stroke="#666" strokeWidth=".5" /></Icon>
                    </button>
                ))}
            </div>
            <div className="ml-1 flex">
                {layoutTabs.map((t) => (
                    <button key={t} type="button" onClick={() => setActive(t)} className={clsx("relative -mr-[3px] w-[50px] pb-[3px]", active === t && "z-10 font-bold")}>
                        <svg className="absolute inset-0 size-full" viewBox="0 0 50 16" preserveAspectRatio="none" aria-hidden="true">
                            <path d="m0 0 8 15.500h33L49 0" fill={active === t ? "#fff" : "#ececec"} stroke="#999" />
                        </svg>
                        <span className="relative">{t}</span>
                    </button>
                ))}
            </div>
        </div>
    );
}

function SideStrip() {
    return (
        <div className="w-[25px] shrink-0 border-r border-[#dedede] pt-[6px] pl-[4px]">
            <Icon w={16} h={44}>
                <path d="M1.500 9V6H7M5 3l3 3-3 3M9 2.500h6v2H9zM12.500 5v6" stroke="#222" strokeWidth="1.300" />
                <path d="M1.500 12.500h13v4h-13zM4 14.500h3M10 14.500h2" stroke="#444" />
                <path d="M2.500 19.500h11v10h-11zM4 22l3 5M7 21l-4 5M8 24l3-3v6M10 23l3 3" stroke="#444" />
                <path d="M2 32.500h5M9 32.500h5M4.500 33v9M11.500 33v9M2 36.500h12M8 34v8M2 39h3" stroke="#444" />
            </Icon>
        </div>
    );
}

export default function App() {
    return (
        <div className="relative flex h-screen flex-col overflow-hidden bg-[#e6e6e6] font-['Open_Sans','Noto_Sans_CJK_SC',sans-serif]">
            <header className="flex flex-col gap-[7px] bg-[#2b579a]">
                <TitleBar />
                <MenuTabs />
            </header>
            <div className="flex h-[98px] shrink-0 overflow-hidden border-b border-[#d0d0d0] bg-[#f1f1f1] text-[13px] text-[#444]">
                <DrawGroup />
                <ModifyGroup />
                <AnnotateGroup />
                <PropertyGroup />
                <ClipboardGroup />
            </div>
            <div className="flex min-h-0 flex-1">
                <SideStrip />
                <div className="flex min-w-0 flex-1 flex-col">
                    <div className="flex min-h-0 flex-1">
                        <PropertyPanel />
                        <div className="mx-[2px] w-[2px] shrink-0 bg-[#dadada]" />
                        <main className="flex min-w-0 flex-1 flex-col">
                            <DocTabs />
                            <DrawingCanvas />
                            <LayoutTabs />
                        </main>
                    </div>
                    <div className="h-[6px] shrink-0 bg-[#cdcdcd]" />
                    <footer className="h-[10px] shrink-0 overflow-hidden pl-1 text-[13px] leading-[20px] text-[#444]">命令行</footer>
                </div>
            </div>
            <p className="pointer-events-none absolute right-[14px] bottom-[6px] z-20 font-['Liberation_Sans',sans-serif] text-[18px] leading-[26px] text-[#d6d6d6] [text-shadow:1px_1px_0_#777]">
                CSDN @biyezuopinvip
            </p>
        </div>
    );
}
